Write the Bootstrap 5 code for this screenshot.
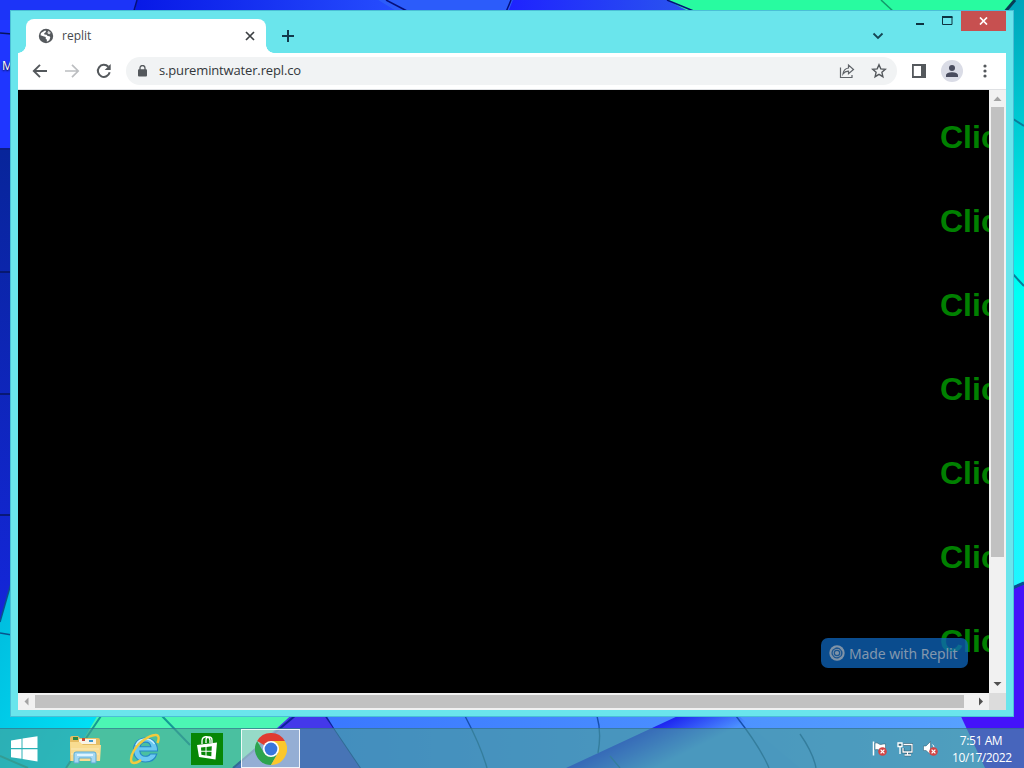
<!DOCTYPE html>
<html lang="en">

<head>
    <meta charset="UTF-8">
    <meta name="viewport" content="width=device-width, initial-scale=1.0">
    <title>replit</title>
    <link href="https://cdn.jsdelivr.net/npm/bootstrap@5.3.0/dist/css/bootstrap.min.css" rel="stylesheet">
    <style>
        body {
            font-family: "Open Sans", "Noto Sans", sans-serif;
            background: #1f36ff;
        }

        svg {
            display: block;
            flex-shrink: 0;
        }

        .desktop {
            width: 1024px;
            height: 768px;
        }

        .wallpaper {
            position: absolute;
            inset: 0;
        }

        .desktop-label {
            position: absolute;
            left: 2px;
            top: 57px;
            font-size: 12px;
            text-shadow: 0 1px 2px #000;
        }

        /* Browser window */
        .browser {
            position: absolute;
            left: 10px;
            top: 10px;
            width: 1004px;
            height: 707px;
            padding: 0 7px 6px;
            background: #6ae5ec;
            border: 1px solid #4bbfd6;
        }

        .title-bar {
            height: 42px;
            padding-left: 8px;
        }

        .page-tab {
            width: 240px;
            height: 34px;
            margin-top: 8px;
            padding: 0 9px 0 12px;
            border-radius: 8px 8px 0 0;
            font-size: 12px;
            color: #45494d;
            position: relative;
        }

        .page-tab::before,
        .page-tab::after {
            content: "";
            position: absolute;
            bottom: 0;
            width: 8px;
            height: 8px;
        }

        .page-tab::before {
            left: -8px;
            background: radial-gradient(circle at 0 0, transparent 7.5px, #fff 8px);
        }

        .page-tab::after {
            right: -8px;
            background: radial-gradient(circle at 100% 0, transparent 7.5px, #fff 8px);
        }

        .new-tab {
            margin: 18px 0 0 15px;
        }

        .tab-search {
            margin: 20px 23px 0 0;
        }

        .btn-min {
            width: 28px;
            height: 20px;
            padding: 12px 0 0 9px;
        }

        .btn-max {
            width: 26px;
            height: 20px;
            padding: 5px 0 0 7px;
        }

        .btn-shut {
            width: 45px;
            height: 20px;
            background: #c75050;
        }

        .tool-bar {
            height: 37px;
            padding: 0 14px 0 14px;
            border-bottom: 1px solid #dfe1e4;
        }

        .address {
            width: 771px;
            height: 28px;
            margin-left: 14px;
            padding: 0 10px 0 11px;
            background: #f1f3f4;
            font-size: 13px;
            color: #33373b;
        }

        .address-text {
            margin-left: 11px;
            letter-spacing: -.15px;
        }

        .avatar {
            width: 22px;
            height: 22px;
            background: #dadce6;
        }

        .page {
            width: 971px;
            height: 603px;
            background: #000;
            position: relative;
        }

        .page h1 {
            height: 84px;
            padding: 0 0 0 922px;
            margin: 0;
            font: bold 32px/84px "Liberation Sans", sans-serif;
            color: #008000;
        }

        .page-list {
            margin-top: 5px;
        }

        .made-with {
            position: absolute;
            left: 803px;
            top: 548px;
            width: 147px;
            height: 30px;
            padding-left: 8px;
            border-radius: 7px;
            background: rgba(14, 101, 190, .75);
            font-family: "Noto Sans", sans-serif;
            font-size: 14px;
            color: #8297ad;
        }

        .made-with span {
            margin-left: 4px;
            letter-spacing: -.1px;
        }

        .scroll-v {
            width: 17px;
            height: 603px;
            background: #f1f1f1;
        }

        .thumb-v {
            width: 13px;
            height: 450px;
            background: #c1c1c1;
        }

        .scroll-h {
            width: 971px;
            height: 17px;
            background: #f1f1f1;
        }

        .thumb-h {
            width: 929px;
            height: 13px;
            background: #c1c1c1;
        }

        .corner {
            width: 17px;
            height: 17px;
            background: #dcdcdc;
        }

        /* Taskbar */
        .task-bar {
            position: absolute;
            left: 0;
            bottom: 0;
            width: 1024px;
            height: 40px;
            background: rgba(74, 157, 147, .6);
            border-top: 1px solid rgba(40, 90, 130, .45);
        }

        .task-item {
            height: 39px;
        }

        .start {
            width: 48px;
        }

        .pinned {
            width: 62px;
        }

        .task-active {
            width: 59px;
            margin-left: 3px;
            background: rgba(255, 255, 255, .42);
            border: 1px solid rgba(255, 255, 255, .85);
        }

        .tray {
            gap: 10px;
            margin-right: 14px;
        }

        .clock {
            width: 58px;
            margin-right: 14px;
            font-size: 12px;
            line-height: 17px;
            letter-spacing: -.4px;
            white-space: nowrap;
        }
    </style>
</head>

<body>
    <div class="desktop position-relative overflow-hidden">
        <svg class="wallpaper" width="1024" height="768" viewBox="0 0 1024 768">
            <defs>
                <linearGradient id="leftBlue" x2="0" y2="1">
                    <stop stop-color="#08259a" />
                    <stop offset="1" stop-color="#1426da" />
                </linearGradient>
                <linearGradient id="topBlue">
                    <stop stop-color="#0718e6" />
                    <stop offset="1" stop-color="#2850ff" />
                </linearGradient>
                <linearGradient id="midBlue">
                    <stop stop-color="#1e22ff" />
                    <stop offset="1" stop-color="#2b59ed" />
                </linearGradient>
                <linearGradient id="rightCyan" x2="0" y2="1">
                    <stop stop-color="#00a5bb" />
                    <stop offset=".5" stop-color="#00fff4" />
                    <stop offset="1" stop-color="#20f5ff" />
                </linearGradient>
                <linearGradient id="leftCyan" x2="1" y2="1">
                    <stop stop-color="#00b9dc" />
                    <stop offset="1" stop-color="#00e6fa" />
                </linearGradient>
                <linearGradient id="lowBlue">
                    <stop stop-color="#3a78ff" />
                    <stop offset="1" stop-color="#58a2ff" />
                </linearGradient>
                <linearGradient id="fold" gradientUnits="userSpaceOnUse" x1="655" y1="726" x2="672" y2="760">
                    <stop stop-color="#1c22f0" />
                    <stop offset="1" stop-color="#4c92ff" />
                </linearGradient>
            </defs>
            <!-- top edge -->
            <path d="M0 0H137L133 20H0z" fill="#1c34f8" />
            <path d="M137 0H378L410 20H133z" fill="url(#topBlue)" />
            <path d="M378 0H513L505 20H410z" fill="#2c5cfa" />
            <path d="M513 0H667L705 20H505z" fill="url(#midBlue)" />
            <path d="M667 0H1014L1003 20H705z" fill="#28fba0" />
            <path d="M137 0L133 14M386 0L407 11M511 0L506 12M667 0L696 12" stroke="#06107c" stroke-width="1.5" />
            <path d="M881 0L894 12" stroke="#129a6a" stroke-width="1.5" />
            <!-- right edge -->
            <path d="M1014 0H1024V590H1004V16z" fill="url(#rightCyan)" />
            <path d="M1015 0L1004 13" stroke="#073d55" stroke-width="3" />
            <path d="M1010 117L1024 126M1010 271L1024 286" stroke="#087e9a" stroke-width="2" />
            <path d="M1008 589L1024 582V768H985L958 712H1008z" fill="#4412fa" />
            <path d="M1010 589L1024 583" stroke="#05508f" stroke-width="3" />
            <!-- left edge -->
            <path d="M0 150H12V580L0 622z" fill="url(#leftBlue)" />
            <path d="M0 33L12 34M0 149H12M0 272H12M0 394H12M0 515H12" stroke="#07145e" stroke-width="1.5" />
            <path d="M0 622L12 580V710H103L68 768H0z" fill="url(#leftCyan)" />
            <path d="M0 622L12 580M0 633L12 635" stroke="#08538d" stroke-width="1.5" />
            <!-- bottom edge -->
            <path d="M101 710H300L233 768H66z" fill="#4cf6b4" />
            <path d="M101 716L66 768M162 716L190 745M0 756L28 768" stroke="#139b95" stroke-width="2" fill="none" />
            <path d="M297 710H323L361 768H233z" fill="#4438ea" />
            <path d="M296 715L233 768M325 715L334 728L361 768" stroke="#0c2399" stroke-width="2" fill="none" />
            <path d="M323 710H958L985 768H361L334 728z" fill="url(#lowBlue)" />
            <path d="M680 715L566 768H800L740 717z" fill="url(#fold)" />
            <path d="M465 716C474 733 482 750 487 768M597 716C601 730 600 742 598 753M736 716C750 734 762 751 769 768M800 734C807 744 814 757 816 768M610 756L620 768"
                stroke="#164fac" stroke-width="1.4" fill="none" />
        </svg>

        <div class="desktop-label text-white">M</div>

        <!-- Browser window -->
        <div class="browser">
            <div class="title-bar d-flex align-items-start">
                <div class="page-tab bg-white d-flex align-items-center">
                    <svg width="16" height="16" viewBox="0 0 16 16">
                        <circle cx="8" cy="8" r="7.2" fill="#55595d" />
                        <path d="M7 2.6c1 .1 1.3.9.6 1.6L6.2 5.3l.2 1.3 2.2.2 1 1.3 2 .2.7 1.3-1 2.6-2.5 1.6.1-2-1.3-1.2.2-1.5-1.8-.5L2.5 7.2 3 5.1z"
                            fill="#fff" />
                        <path d="M10.5 2.7l2.3 2-1.1 1.6-1.7-.4-.6-1.4z" fill="#fff" opacity=".75" />
                    </svg>
                    <span class="ms-2">replit</span>
                    <svg class="ms-auto" width="14" height="14" viewBox="0 0 14 14">
                        <path d="M3 3l8 8M11 3l-8 8" stroke="#3c4043" stroke-width="1.7" />
                    </svg>
                </div>
                <svg class="new-tab" width="14" height="14" viewBox="0 0 14 14">
                    <path d="M7 1v12M1 7h12" stroke="#123a4c" stroke-width="2" />
                </svg>
                <svg class="tab-search ms-auto" width="12" height="10" viewBox="0 0 12 10">
                    <path d="M1.5 2.5L6 7l4.500-4.500" fill="none" stroke="#154654" stroke-width="1.8" />
                </svg>
                <div class="btn-min">
                    <svg width="9" height="3">
                        <rect width="8" height="2" fill="#0d3340" />
                    </svg>
                </div>
                <div class="btn-max">
                    <svg width="11" height="9" viewBox="0 0 11 9">
                        <path d="M.5 1v7.500h9.500V1" fill="none" stroke="#0d3340" />
                        <path d="M0 1h10.500" stroke="#0d3340" stroke-width="2" />
                    </svg>
                </div>
                <div class="btn-shut d-flex align-items-center justify-content-center">
                    <svg width="9" height="8" viewBox="0 0 9 8">
                        <path d="M1 .5l7 7M8 .5l-7 7" stroke="#fff" stroke-width="1.7" />
                    </svg>
                </div>
            </div>

            <div class="tool-bar bg-white d-flex align-items-center">
                <svg width="16" height="16" viewBox="0 0 16 16">
                    <path d="M15 8H2.500M8 1.800L1.800 8 8 14.200" fill="none" stroke="#54585c" stroke-width="1.9" />
                </svg>
                <svg class="ms-3" width="16" height="16" viewBox="0 0 16 16">
                    <path d="M1 8h12.500M8 1.800L14.200 8 8 14.200" fill="none" stroke="#bcbec1" stroke-width="1.700" />
                </svg>
                <svg class="ms-3" width="16" height="16" viewBox="0 0 16 16">
                    <path d="M13.700 9.300A6 6 0 1 1 12.300 3.800" fill="none" stroke="#54585c" stroke-width="2" />
                    <path d="M14.700 1v6H8.700z" fill="#54585c" />
                </svg>
                <div class="address rounded-pill d-flex align-items-center">
                    <svg width="11" height="12" viewBox="0 0 11 12">
                        <rect x="1" y="4.200" width="9" height="7.300" rx="1" fill="#54585c" />
                        <path d="M3 5V3a2.500 2.500 0 0 1 5 0v2" fill="none" stroke="#54585c" stroke-width="1.300" />
                    </svg>
                    <span class="address-text">s.puremintwater.repl.co</span>
                    <svg class="ms-auto" width="16" height="16" viewBox="0 0 16 16">
                        <path d="M1.500 4.500v10h11.500v-2.500" fill="none" stroke="#5f6368" stroke-width="1.200" />
                        <path d="M9.500 5V2l5 4.500-5 4.300V8.200C7 8 5.500 9 4 11c.4-3.500 2.200-5.600 5.500-6z" fill="none"
                            stroke="#5f6368" stroke-width="1.200" />
                    </svg>
                    <svg class="ms-3" width="16" height="16" viewBox="0 0 16 16">
                        <path d="M8 1.800l1.800 4.100 4.500.4-3.400 3 1 4.400L8 11.400l-3.900 2.300 1-4.400-3.400-3 4.500-.4z"
                            fill="none" stroke="#54585c" stroke-width="1.400" />
                    </svg>
                </div>
                <svg class="ms-auto" width="14" height="14" viewBox="0 0 14 14">
                    <path d="M.9 1h12.200v12H.9z" fill="none" stroke="#54585c" stroke-width="1.800" />
                    <path d="M9 0h5v14H9z" fill="#54585c" />
                </svg>
                <div class="avatar rounded-circle d-flex align-items-center justify-content-center ms-auto">
                    <svg width="14" height="14" viewBox="0 0 14 14">
                        <circle cx="7" cy="4" r="3" fill="#494c5e" />
                        <path d="M1 13v-1.500C1 9 4.500 8.300 7 8.300s6 .7 6 3.200V13z" fill="#494c5e" />
                    </svg>
                </div>
                <svg class="ms-auto" width="14" height="14" viewBox="0 0 14 14">
                    <circle cx="7" cy="2" r="1.600" fill="#54585c" />
                    <circle cx="7" cy="7" r="1.600" fill="#54585c" />
                    <circle cx="7" cy="12" r="1.600" fill="#54585c" />
                </svg>
            </div>

            <div class="d-flex">
                <div class="page overflow-hidden">
                    <div class="page-list">
                        <h1>Clic</h1>
                        <h1>Clic</h1>
                        <h1>Clic</h1>
                        <h1>Clic</h1>
                        <h1>Clic</h1>
                        <h1>Clic</h1>
                        <h1>Clic</h1>
                    </div>
                    <div class="made-with d-flex align-items-center">
                        <svg width="16" height="16" viewBox="0 0 16 16">
                            <circle cx="8" cy="8" r="7.700" fill="#7f93a8" />
                            <g fill="none" stroke="#1b5590" stroke-width="1.200">
                                <circle cx="8" cy="8" r="2.700" />
                                <path d="M3.200 9.500C2 4 8 2 11 4M6.500 3.200C12 2 14 8 12 11M12.800 6.500C14 12 8 14 5 12M9.500 12.800C4 14 2 8 4 5" />
                            </g>
                        </svg>
                        <span>Made with Replit</span>
                    </div>
                </div>
                <div class="scroll-v d-flex flex-column align-items-center justify-content-between">
                    <div class="d-flex flex-column align-items-center">
                        <svg width="13" height="17" viewBox="0 0 13 17">
                            <path d="M2.500 11L6.500 6.500l4 4.500z" fill="#a3a3a3" />
                        </svg>
                        <div class="thumb-v"></div>
                    </div>
                    <svg width="13" height="17" viewBox="0 0 13 17">
                        <path d="M2.500 6h8l-4 4z" fill="#505050" />
                    </svg>
                </div>
            </div>
            <div class="d-flex">
                <div class="scroll-h d-flex align-items-center justify-content-between">
                    <div class="d-flex align-items-center">
                        <svg width="17" height="13" viewBox="0 0 17 13">
                            <path d="M10.500 2.500v8l-4-4z" fill="#a3a3a3" />
                        </svg>
                        <div class="thumb-h"></div>
                    </div>
                    <svg width="17" height="13" viewBox="0 0 17 13">
                        <path d="M7 2.500v8l4-4z" fill="#505050" />
                    </svg>
                </div>
                <div class="corner"></div>
            </div>
        </div>

        <!-- Taskbar -->
        <div class="task-bar d-flex align-items-center">
            <div class="task-item start d-flex align-items-center justify-content-center">
                <svg width="28" height="26" viewBox="0 0 28 26">
                    <path d="M1 4.500l10.500-1.700V12H1zM12.500 2.600L27.500.3V12h-15zM1 13.200h10.500v9.600L1 21.200zM12.500 13.200h15v12.200l-15-2.300z"
                        fill="#fff" />
                </svg>
            </div>
            <div class="task-item pinned d-flex align-items-center justify-content-center ms-1 ps-1">
                <!-- file explorer -->
                <svg width="32" height="30" viewBox="0 0 32 30">
                    <path d="M1 4q0-2 2-2h6l2 2h18q2 0 2 2v21H1z" fill="#e6bd62" />
                    <path d="M4 3h5v3H4z" fill="#298849" />
                    <path d="M10 5h17v5H10z" fill="#f8f4e6" />
                    <path d="M13 4h3v3h-3z" fill="#c64a35" />
                    <path d="M20 6h4v2h-4z" fill="#3c98cc" />
                    <path d="M1 8h10l3 3h18l-1 16H2z" fill="#f8dc91" />
                    <path d="M2 15h28M2 20h28" stroke="#fbeab8" />
                    <path d="M5 29V20q0-2 2-2h18q2 0 2 2v9h-5v-5H10v5z" fill="#a5d8f2" stroke="#5aabd3" />
                    <path d="M8 20h16v2H8z" fill="#dff4ff" />
                </svg>
            </div>
            <div class="task-item pinned d-flex align-items-center justify-content-center">
                <!-- internet explorer -->
                <svg width="32" height="32" viewBox="0 0 32 32">
                    <path d="M28.500 18H10.800c.4 3.500 2.600 5.300 5.700 5.300 2.200 0 3.900-.8 4.700-2.300h6.600c-1.500 5-5.800 8-11.300 8C9.500 29 4.500 24 4.500 17S9.500 5 16.500 5s12 5 12 12zM11 13.800h10.900c-.5-3-2.400-4.700-5.400-4.700s-4.900 1.700-5.500 4.700z"
                        fill="#6cc9f1" stroke="#2588c6" stroke-width="1.100" />
                    <path d="M7 12C9 7.500 12.500 6 16.500 6s7 1.800 9 5" fill="none" stroke="#c6f0ff" stroke-width="1.300" />
                    <path d="M28.500 10C30.500 5 30 1.500 26 2 20 2.500 10 9 5 17.500 1 24 1 30 5 30c2 0 4.500-1 7-3" fill="none"
                        stroke="#f2ca3e" stroke-width="2.400" />
                </svg>
            </div>
            <div class="task-item pinned d-flex align-items-center justify-content-center">
                <!-- store -->
                <svg width="32" height="32" viewBox="0 0 32 32">
                    <path d="M0 0h32v32H0z" fill="#078707" />
                    <path d="M6 12l20-2.500-1.500 17L8 24z" fill="#fff" />
                    <path d="M11 11V8c0-5 7-6 8-1v3M15 10V7c0-4 6-4 6 0v3" fill="none" stroke="#fff" stroke-width="1.300" />
                    <path d="M10 14.500l4.500-.5v3.700h-4.300zM15.500 13.900l5.300-.6-.2 4.400h-5.100zM10.200 18.700h4.300v3.700l-4.100-.7zM15.500 18.700h5l-.2 4.600-4.800-.8z"
                        fill="#078707" />
                </svg>
            </div>
            <div class="task-item task-active d-flex align-items-center justify-content-center">
                <!-- chrome -->
                <svg width="32" height="32" viewBox="0 0 32 32">
                    <path d="M16 16L2.140 8A16 16 0 0 1 29.860 8z" fill="#e03c31" />
                    <path d="M2.140 8A16 16 0 0 0 16 32L22.900 20 16 16 9.100 20z" fill="#2da44e" />
                    <path d="M29.860 8A16 16 0 0 1 16 32L22.900 20 20 9z" fill="#fbc72b" />
                    <path d="M16 8H29.860L22.900 20z" fill="#fbc72b" />
                    <circle cx="16" cy="16" r="8" fill="#fff" />
                    <circle cx="16" cy="16" r="6.400" fill="#3976dc" />
                </svg>
            </div>

            <div class="tray d-flex align-items-center ms-auto">
                <svg width="15" height="17" viewBox="0 0 15 17">
                    <path d="M1.500 1.500v14" stroke="#fff" stroke-width="1.500" />
                    <path d="M3 3c3-1 4 2 6 1.500S12 4 13.500 4v6c-3-.5-3 1-5 .5S5 9 3 10z" fill="#fff" stroke="#264f5f"
                        stroke-width=".5" />
                    <circle cx="10.500" cy="11.500" r="4.300" fill="#d44444" />
                    <path d="M8.600 9.600l3.800 3.800M12.400 9.600l-3.800 3.800" stroke="#fff" stroke-width="1.300" />
                </svg>
                <svg width="16" height="16" viewBox="0 0 16 16">
                    <path d="M6.500 3.500H15v7.500H6v-4M10.500 11v2.500M7.500 14h6.500" fill="none" stroke="#234c62" stroke-width="2.600" />
                    <path d="M6.500 3.500H15v7.500H6v-4M10.500 11v2.500M7.500 14h6.500" fill="none" stroke="#fff" stroke-width="1.300" />
                    <path d="M1 2h4v3.500H1zM3 5.500V13" fill="#35677a" stroke="#fff" stroke-width="1.300" />
                </svg>
                <svg width="15" height="17" viewBox="0 0 15 17">
                    <path d="M.5 6H3l4.500-4.500v13L3 10.500H.5z" fill="#fff" stroke="#2b5768" stroke-width=".5" />
                    <path d="M9.500 4.500q1.500 1.500 1.500 3" fill="none" stroke="#fff" />
                    <circle cx="10.500" cy="11.500" r="4.300" fill="#d44444" />
                    <path d="M8.600 9.600l3.800 3.800M12.400 9.600l-3.800 3.800" stroke="#fff" stroke-width="1.300" />
                </svg>
            </div>
            <div class="clock text-white text-center">
                <div>7:51 AM</div>
                <div>10/17/2022</div>
            </div>
        </div>
    </div>

    <script src="https://cdn.jsdelivr.net/npm/bootstrap@5.3.0/dist/js/bootstrap.bundle.min.js"></script>
</body>

</html>
